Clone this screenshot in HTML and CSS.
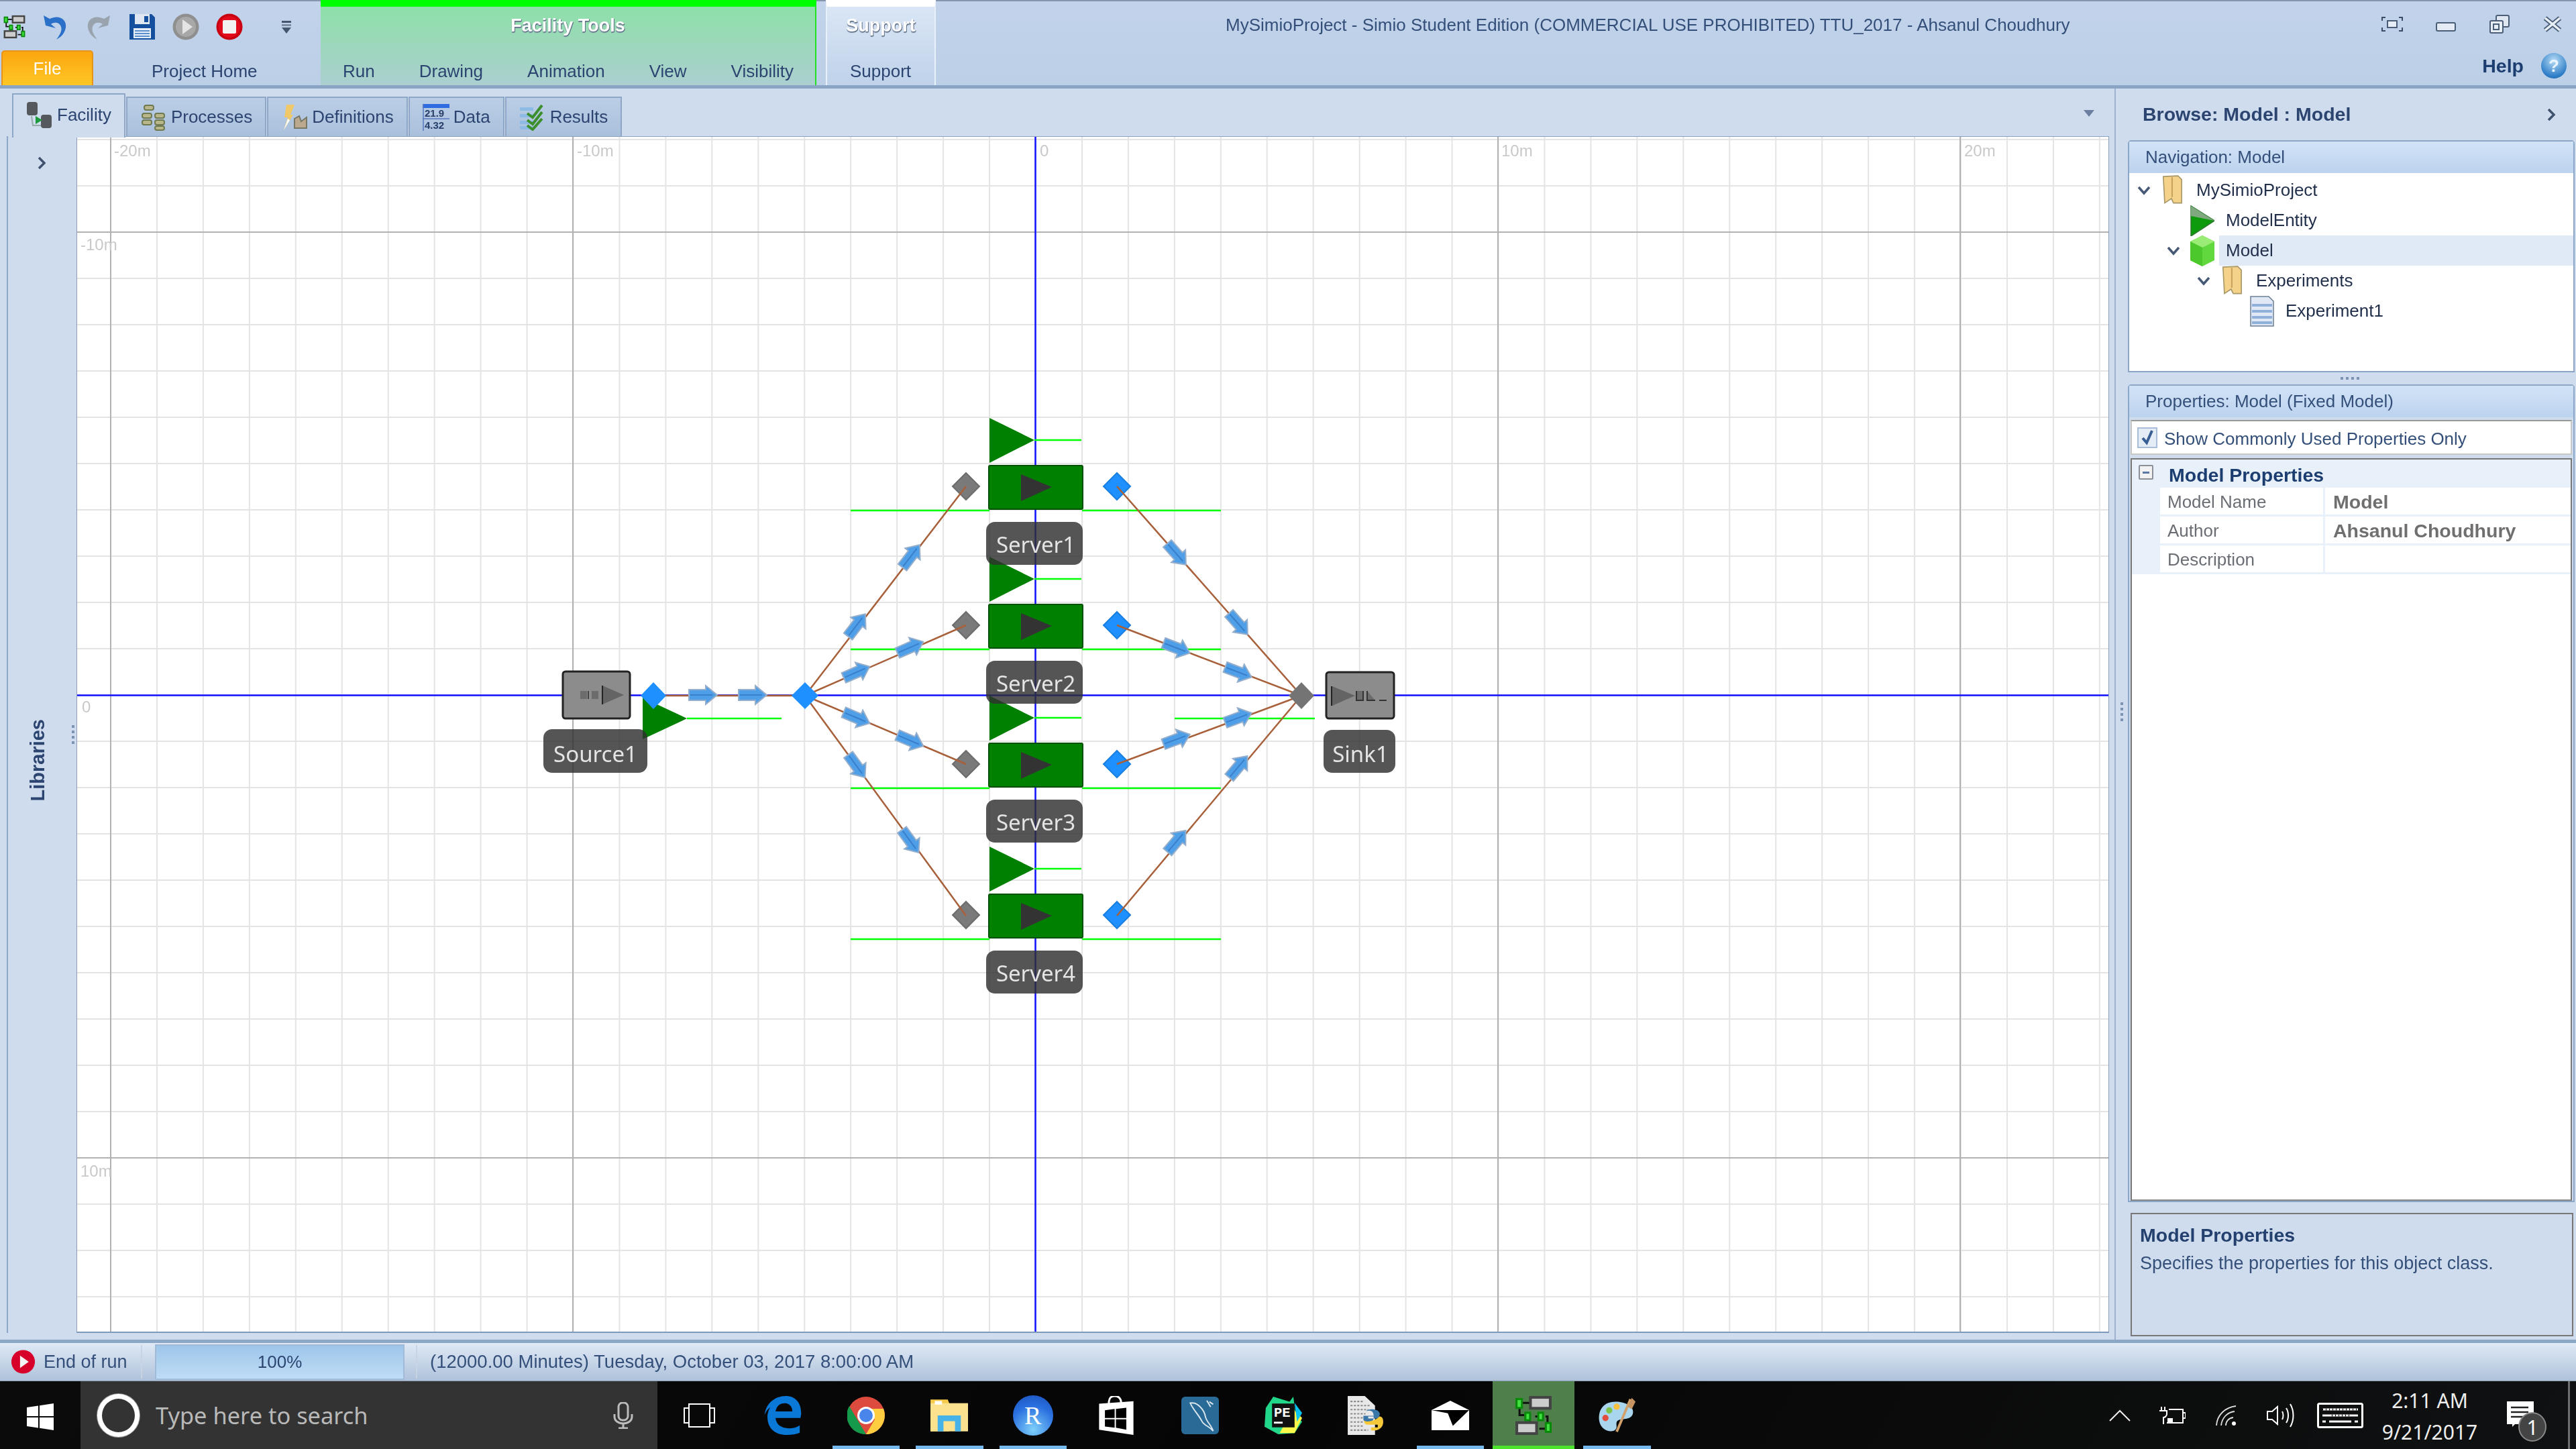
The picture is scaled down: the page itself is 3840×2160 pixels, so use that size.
FILE: index.html
```html
<!DOCTYPE html>
<html lang="en">
<head>
<meta charset="utf-8">
<title>MySimioProject - Simio</title>
<link rel="stylesheet" href="styles.css">
</head>
<body>
<svg class="defs" width="0" height="0" aria-hidden="true">
  <defs>
    <symbol id="simio" viewBox="0 0 55 57">
      <path d="M8 10H22M7 16V28H14M7 28V20M30 30H36M45 30H48V42M48 48H36M22 30V38" stroke="#111" stroke-width="3" fill="none"/>
      <rect x="21" y="0" width="33" height="20" fill="#444"/><rect x="25" y="4" width="25" height="12" fill="#ccc"/>
      <rect x="1" y="3" width="11" height="16" fill="#0a8a0a"/><rect x="4" y="6" width="5" height="10" fill="#3fe03f"/>
      <rect x="14" y="23" width="10" height="14" fill="#0a8a0a"/><rect x="17" y="26" width="4" height="8" fill="#3fe03f"/>
      <rect x="33" y="23" width="10" height="14" fill="#0a8a0a"/><rect x="36" y="26" width="4" height="8" fill="#3fe03f"/>
      <rect x="1" y="37" width="33" height="20" fill="#444"/><rect x="5" y="41" width="25" height="12" fill="#ccc"/>
      <rect x="44" y="38" width="10" height="16" fill="#0a8a0a"/><rect x="47" y="41" width="4" height="10" fill="#3fe03f"/>
    </symbol>
    <symbol id="folder" viewBox="0 0 30 42">
      <path d="M2 2 22 1 27 6V38H16L13 32 4 38Z" fill="#f5d28a" stroke="#a89868" stroke-width="1.5"/>
      <path d="M14 3V30" stroke="#c9a45e" stroke-width="2"/>
    </symbol>
    <g id="arw">
      <polygon points="-21,-8 4,-8 4,-14 21,0 4,14 4,8 -21,8" fill="#4f9fe8" stroke="#94aecb" stroke-width="2"/>
      <path d="M-19 0H14" stroke="#3a7fc8" stroke-width="2"/>
    </g>
    <g id="srv">
      <polygon points="1475,623 1542,656 1475,690" fill="#008000"/>
      <path d="M1542 656H1612M1268 761H1475M1613 761H1820" stroke="#00ff00" stroke-width="2.5"/>
      <rect x="1474" y="694" width="140" height="65" rx="2" fill="#008000" stroke="#005200" stroke-width="2"/>
      <polygon points="1522,707 1568,726 1522,747" fill="#333"/>
      <polygon points="1440,705 1460,725 1440,745 1420,725" fill="#7a7a7a" stroke="#6c6c6c" stroke-width="2"/>
      <polygon points="1665,705 1685,725 1665,745 1645,725" fill="#1e90ff" stroke="#1a7fe0" stroke-width="2"/>
    </g>
    <pattern id="minor" patternUnits="userSpaceOnUse" x="1543" y="1035" width="68.95" height="69">
      <rect x="0" y="0" width="2" height="69" fill="#e4e4e4"/>
      <rect x="0" y="0" width="68.95" height="2" fill="#e4e4e4"/>
    </pattern>
  </defs>
</svg>

<div class="window">
  <header class="ribbon">
    <div class="rib-left">
      <div class="qat">
        <svg class="qat-logo"><use href="#simio"/></svg>
        <svg class="qat-ico" viewBox="0 0 40 40"><path d="M6 18 3 3 12 8C26 1 38 9 36 21 35 28 30 35 22 39 27 32 31 26 29 20 27 13 19 12 14 16L21 22Z" fill="#2a70c8"/></svg>
        <svg class="qat-ico" viewBox="0 0 40 40"><path d="M34 18 37 3 28 8C14 1 2 9 4 21 5 28 10 35 18 39 13 32 9 26 11 20 13 13 21 12 26 16L19 22Z" fill="#98a3ae"/></svg>
        <svg class="qat-ico" viewBox="0 0 40 40"><path d="M1 1H34L39 6V39H1Z" fill="#14509e"/><rect x="9" y="1" width="22" height="15" fill="#dfe8f2"/><rect x="23" y="4" width="6" height="9" fill="#14509e"/><rect x="7" y="22" width="26" height="15" fill="#e6eef8"/><path d="M9 26H31M9 30H31M9 34H31" stroke="#5b8fd0" stroke-width="2"/></svg>
        <svg class="qat-ico" viewBox="0 0 40 40"><circle cx="20" cy="20" r="19.500" fill="#8f8f8f"/><circle cx="20" cy="20" r="15" fill="#a8a8a8"/><polygon points="15,9 30,20 15,31" fill="#e4e4e4"/></svg>
        <svg class="qat-ico" viewBox="0 0 40 40"><circle cx="20" cy="20" r="19.500" fill="#c80010"/><circle cx="20" cy="20" r="16" fill="#e20b1c"/><rect x="10" y="10" width="20" height="20" rx="2" fill="#f2f2f2"/></svg>
        <svg class="qat-drop" viewBox="0 0 16 20"><rect x="1" y="1" width="14" height="3" fill="#44566e"/><rect x="1" y="6" width="14" height="3" fill="#7d8da2"/><polygon points="1,11 15,11 8,20" fill="#44566e"/></svg>
      </div>
      <nav class="rib-tabs">
        <span class="file-tab">File</span>
        <span class="rtab home">Project Home</span>
      </nav>
    </div>
    <div class="ctx ctx-green">
      <div class="ctx-title">Facility Tools</div>
      <nav class="rib-tabs ctx-tabs">
        <span class="rtab">Run</span><span class="rtab">Drawing</span><span class="rtab">Animation</span><span class="rtab">View</span><span class="rtab">Visibility</span>
      </nav>
    </div>
    <div class="ctx ctx-support">
      <div class="ctx-title">Support</div>
      <nav class="rib-tabs ctx-tabs"><span class="rtab">Support</span></nav>
    </div>
    <div class="rib-right">
      <div class="titlebar">
        <div class="wintitle">MySimioProject - Simio Student Edition (COMMERCIAL USE PROHIBITED) TTU_2017 - Ahsanul Choudhury</div>
        <div class="winbtns">
          <svg class="wb wb1" viewBox="0 0 34 24"><path d="M2 7V2H7M27 2H32V7M32 17V22H27M7 22H2V17" stroke="#3b4d66" stroke-width="2" fill="none"/><rect x="10" y="7" width="14" height="10" fill="#e6edf6" stroke="#4b5e78" stroke-width="2"/></svg>
          <svg class="wb wb2" viewBox="0 0 30 14"><rect x="1" y="1" width="28" height="12" rx="2" fill="#e4ebf5" stroke="#4b5e78" stroke-width="2"/></svg>
          <svg class="wb wb3" viewBox="0 0 30 28"><rect x="10" y="1" width="19" height="17" rx="2" fill="#dfe7f2" stroke="#4b5e78" stroke-width="2"/><rect x="1" y="9" width="19" height="18" rx="2" fill="#e8eef6" stroke="#4b5e78" stroke-width="2"/><rect x="6" y="14" width="8" height="8" fill="none" stroke="#4b5e78" stroke-width="2"/></svg>
          <svg class="wb wb4" viewBox="0 0 30 24"><path d="M4 3 26 21M26 3 4 21" stroke="#4b5e78" stroke-width="7"/><path d="M4 3 26 21M26 3 4 21" stroke="#e8eef6" stroke-width="3.500"/></svg>
        </div>
      </div>
      <div class="helpbar">
        <span class="help">Help</span>
        <span class="help-ico">?</span>
      </div>
    </div>
  </header>

  <main class="main">
    <section class="workspace">
      <div class="doctabs">
        <div class="dtab active">
          <svg class="dt-ico" viewBox="0 0 40 40"><rect x="1" y="1" width="16" height="20" rx="4" fill="#55585c"/><rect x="22" y="20" width="16" height="20" rx="4" fill="#55585c"/><polygon points="14,22 24,28 14,34" fill="#1d9a3c"/><path d="M8 22 10 36H22" stroke="#9aa" fill="none" stroke-width="2"/></svg>
          <span>Facility</span>
        </div>
        <div class="dtab">
          <svg class="dt-ico" viewBox="0 0 40 40"><g fill="#b9b68a" stroke="#6f7a52" stroke-width="2"><rect x="6" y="2" width="14" height="7" rx="3"/><rect x="3" y="14" width="14" height="7" rx="3"/><rect x="22" y="14" width="14" height="7" rx="3"/><rect x="3" y="24" width="14" height="7" rx="3"/><rect x="22" y="24" width="14" height="7" rx="3"/><rect x="22" y="33" width="14" height="6" rx="3"/></g></svg>
          <span>Processes</span>
        </div>
        <div class="dtab">
          <svg class="dt-ico" viewBox="0 0 40 40"><path d="M8 1H20L14 16 18 16 4 39 10 20 5 20Z" fill="#f0c868"/><path d="M4 39 10 22 13 24Z" fill="#fff"/><path d="M20 36V22L27 18 30 26 38 20V36Z" fill="#bba98f" stroke="#776" stroke-width="2"/></svg>
          <span>Definitions</span>
        </div>
        <div class="dtab">
          <svg class="dt-ico data-ico" viewBox="0 0 40 40"><rect x="0" y="0" width="40" height="6" fill="#2f6ce0"/><path d="M1 0V40M0 22H40" stroke="#5a7ac0" stroke-width="1.500"/><text x="3" y="19" class="data-num">21.9</text><text x="3" y="37" class="data-num">4.32</text></svg>
          <span>Data</span>
        </div>
        <div class="dtab">
          <svg class="dt-ico" viewBox="0 0 40 40"><g fill="#8dbbe6"><rect x="1" y="5" width="20" height="5"/><rect x="1" y="15" width="20" height="5"/><rect x="1" y="25" width="20" height="5"/><rect x="1" y="33" width="20" height="5"/></g><path d="M12 14 20 20 34 2M12 24 20 30 34 12M12 32 20 38 34 22" stroke="#3d8f2d" stroke-width="4" fill="none"/></svg>
          <span>Results</span>
        </div>
        <svg class="doc-drop" viewBox="0 0 16 10"><polygon points="0,0 16,0 8,10" fill="#6b80a0"/></svg>
      </div>
      <div class="work-row">
        <aside class="libstrip">
          <svg class="strip-chev" viewBox="0 0 12 20"><path d="M2 2 10 10 2 18" stroke="#3e516d" stroke-width="3.500" fill="none"/></svg>
          <div class="lib-label">Libraries</div>
          <div class="grip grip-v"></div>
        </aside>
        <div class="canvas">
          <svg class="facility" viewBox="115 204 3028 1781" preserveAspectRatio="none">
            <rect x="115" y="204" width="3028" height="1781" fill="#fff"/>
            <rect x="115" y="204" width="3028" height="1781" fill="url(#minor)"/>
            <path d="M165 204V1985M854 204V1985M2233 204V1985M2922 204V1985M115 346H3143M115 1726H3143" stroke="#b2b2b2" stroke-width="2"/>
            <path d="M1543.500 204V1985M115 1036.500H3143" stroke="#1010ff" stroke-width="2.500"/>
            <g class="gridlabel">
              <text x="170" y="233">-20m</text><text x="860" y="233">-10m</text><text x="1550" y="233">0</text><text x="2238" y="233">10m</text><text x="2928" y="233">20m</text>
              <text x="120" y="373">-10m</text><text x="122" y="1062">0</text><text x="120" y="1754">10m</text>
            </g>
            <!-- source queue + sink queue -->
            <polygon points="958,1040 1024,1071 958,1102" fill="#008000"/>
            <path d="M1024 1071H1165M1751 1071H1960" stroke="#00ff00" stroke-width="2.500"/>
            <!-- servers -->
            <use href="#srv"/>
            <use href="#srv" y="207"/>
            <use href="#srv" y="414"/>
            <use href="#srv" y="639"/>
            <!-- paths -->
            <path class="link" d="M990 1037H1200M1200 1037 1440 725M1200 1037 1440 932M1200 1037 1440 1139M1200 1037 1440 1365M1665 725 1940 1037M1665 932 1940 1037M1665 1139 1940 1037M1665 1365 1940 1037"/>
            <!-- source -->
            <rect x="839" y="1001" width="100" height="70" rx="4" fill="#8c8c8c" stroke="#222" stroke-width="3"/>
            <rect x="865" y="1030" width="10" height="12" fill="#6c6c6c"/><rect x="876" y="1030" width="2" height="12" fill="#444"/><rect x="882" y="1030" width="10" height="12" fill="#6c6c6c"/>
            <polygon points="898,1022 930,1036 898,1050" fill="#646464"/><path d="M898 1022V1050" stroke="#222" stroke-width="2"/>
            <!-- sink -->
            <rect x="1977" y="1002" width="101" height="69" rx="4" fill="#8c8c8c" stroke="#222" stroke-width="3"/>
            <polygon points="1986,1023 2020,1037 1986,1052" fill="#646464"/><path d="M1985 1023V1052" stroke="#222" stroke-width="2"/>
            <path d="M2022 1030V1044H2032V1030M2038 1030V1044H2050" fill="#6c6c6c" stroke="#333" stroke-width="2"/><path d="M2056 1044H2067" stroke="#333" stroke-width="2"/>
            <!-- nodes -->
            <polygon points="974,1017 993,1037 974,1057 955,1037" fill="#1e90ff"/>
            <polygon points="1200,1017 1220,1037 1200,1057 1180,1037" fill="#1e90ff"/>
            <polygon points="1940,1017 1959,1037 1940,1057 1921,1037" fill="#747474"/>
            <!-- arrows -->
            <use href="#arw" transform="translate(1048 1036)"/><use href="#arw" transform="translate(1122 1036)"/>
            <use href="#arw" transform="translate(1277 932) rotate(-52.400)"/><use href="#arw" transform="translate(1358 829) rotate(-52.400)"/>
            <use href="#arw" transform="translate(1277 1002) rotate(-23.600)"/><use href="#arw" transform="translate(1357 965) rotate(-23.600)"/>
            <use href="#arw" transform="translate(1277 1070) rotate(23)"/><use href="#arw" transform="translate(1357 1104) rotate(23)"/>
            <use href="#arw" transform="translate(1277 1142) rotate(53.800)"/><use href="#arw" transform="translate(1357 1254) rotate(53.800)"/>
            <use href="#arw" transform="translate(1754 826) rotate(48.600)"/><use href="#arw" transform="translate(1846 930) rotate(48.600)"/>
            <use href="#arw" transform="translate(1754 966) rotate(20.900)"/><use href="#arw" transform="translate(1846 1002) rotate(20.900)"/>
            <use href="#arw" transform="translate(1754 1102) rotate(-20.400)"/><use href="#arw" transform="translate(1846 1070) rotate(-20.400)"/>
            <use href="#arw" transform="translate(1754 1254) rotate(-50)"/><use href="#arw" transform="translate(1846 1143) rotate(-50)"/>
            <!-- labels -->
            <g class="oblabel">
              <rect x="810" y="1087" width="155" height="65" rx="13"/><text x="887.500" y="1136">Source1</text>
              <rect x="1973" y="1088" width="107" height="64" rx="13"/><text x="2028" y="1136">Sink1</text>
              <rect x="1470" y="778" width="144" height="64" rx="13"/><text x="1544" y="824">Server1</text>
              <rect x="1470" y="985" width="144" height="64" rx="13"/><text x="1544" y="1031">Server2</text>
              <rect x="1470" y="1192" width="144" height="64" rx="13"/><text x="1544" y="1238">Server3</text>
              <rect x="1470" y="1417" width="144" height="64" rx="13"/><text x="1544" y="1463">Server4</text>
            </g>
          </svg>
        </div>
      </div>
    </section>

    <aside class="right">
      <div class="grip grip-r"></div>
      <div class="browse-head">
        <span>Browse: Model : Model</span>
        <svg class="strip-chev" viewBox="0 0 12 20"><path d="M2 2 10 10 2 18" stroke="#3e516d" stroke-width="3.500" fill="none"/></svg>
      </div>
      <section class="panel nav-panel">
        <div class="panel-head">Navigation: Model</div>
        <div class="tree">
          <div class="row l0">
            <svg class="exp" viewBox="0 0 20 14"><path d="M2 2 10 11 18 2" stroke="#465a76" stroke-width="3.500" fill="none"/></svg>
            <svg class="tico"><use href="#folder"/></svg>
            <span class="tlabel">MySimioProject</span>
          </div>
          <div class="row l1">
            <span class="exp"></span>
            <svg class="tico" viewBox="0 0 36 46"><polygon points="1,1 36,23 1,46" fill="#0d9a0d" stroke="#2f7a2f" stroke-width="1.500"/><polygon points="1,1 36,23 1,16" fill="#7fa87f"/></svg>
            <span class="tlabel">ModelEntity</span>
          </div>
          <div class="row l1">
            <svg class="exp" viewBox="0 0 20 14"><path d="M2 2 10 11 18 2" stroke="#465a76" stroke-width="3.500" fill="none"/></svg>
            <svg class="tico" viewBox="0 0 36 46"><polygon points="18,0 36,9 36,37 18,46 0,37 0,9" fill="#62d83f"/><polygon points="18,0 36,9 18,18 0,9" fill="#9aec76"/><polygon points="0,9 18,18 18,46 0,37" fill="#4cc72c"/></svg>
            <span class="tlabel selected">Model</span>
          </div>
          <div class="row l2">
            <svg class="exp" viewBox="0 0 20 14"><path d="M2 2 10 11 18 2" stroke="#465a76" stroke-width="3.500" fill="none"/></svg>
            <svg class="tico"><use href="#folder"/></svg>
            <span class="tlabel">Experiments</span>
          </div>
          <div class="row l3">
            <span class="exp"></span>
            <svg class="tico" viewBox="0 0 36 46"><path d="M1 1H28L35 8V45H1Z" fill="#dfe8f4" stroke="#6e7f95" stroke-width="1.500"/><path d="M3 14H33M3 23H33M3 32H33M3 40H33" stroke="#8fb0da" stroke-width="4"/></svg>
            <span class="tlabel">Experiment1</span>
          </div>
        </div>
      </section>
      <div class="grip grip-h"></div>
      <section class="panel prop-panel">
        <div class="panel-head">Properties: Model (Fixed Model)</div>
        <div class="common">
          <span class="check"><svg viewBox="0 0 22 24"><path d="M4 13 10 20 18 2" stroke="#3a5f95" stroke-width="4" fill="none"/></svg></span>
          <span class="common-text">Show Commonly Used Properties Only</span>
        </div>
        <div class="pgrid">
          <div class="pcat">
            <span class="minus"></span>
            <span>Model Properties</span>
          </div>
          <div class="prow"><span class="pname">Model Name</span><span class="pval">Model</span></div>
          <div class="prow"><span class="pname">Author</span><span class="pval">Ahsanul Choudhury</span></div>
          <div class="prow"><span class="pname">Description</span><span class="pval"></span></div>
        </div>
      </section>
      <section class="descbox">
        <div class="desc-title">Model Properties</div>
        <div class="desc-text">Specifies the properties for this object class.</div>
      </section>
    </aside>
  </main>

  <footer class="status">
    <svg class="st-ico" viewBox="0 0 40 40"><circle cx="20" cy="20" r="19" fill="#d6002a"/><polygon points="15,10 29,20 15,30" fill="#f4f4f4"/></svg>
    <span class="st-run">End of run</span>
    <span class="st-sep"></span>
    <div class="progress">100%</div>
    <span class="st-sep sep2"></span>
    <span class="st-time">(12000.00 Minutes) Tuesday, October 03, 2017 8:00:00 AM</span>
  </footer>
</div>

<footer class="taskbar">
  <div class="start">
    <svg class="winlogo" viewBox="0 0 40 40"><path d="M0 6 17 3.500V19H0ZM19 3.200 40 0V19H19ZM0 21H17V36.500L0 34ZM19 21H40V40L19 36.800Z" fill="#fff"/></svg>
  </div>
  <div class="search">
    <span class="cortana"></span>
    <span class="search-text">Type here to search</span>
    <svg class="mic" viewBox="0 0 30 40"><rect x="8" y="1" width="14" height="26" rx="6" fill="none" stroke="#bbb" stroke-width="3"/><path d="M2 18V22C2 28 8 32 15 32S28 28 28 22V18M15 32V38M8 39H22" fill="none" stroke="#bbb" stroke-width="3"/></svg>
  </div>
  <div class="apps">
    <div class="cell"><svg class="ti ti-view" viewBox="0 0 47 36"><rect x="8" y="1" width="31" height="34" fill="none" stroke="#fff" stroke-width="2"/><path d="M8 7H1V29H8M39 7H46V29H39" fill="none" stroke="#fff" stroke-width="2"/></svg></div>
    <div class="cell"><svg class="ti" viewBox="0 0 50 53"><path d="M49 30H15C16 40 24 44 33 44 39 44 44 43 48 40V50C43 52 37 53 31 53 13 53 4 43 4 28 4 25 5 20 8 15 3 19 1 23 0 26 2 10 14 0 29 0 42 0 50 9 50 24ZM38 21C38 14 33 9 26 10 20 10 16 15 15 21Z" fill="#0a78d7"/></svg></div>
    <div class="cell open"><svg class="ti" viewBox="0 0 56 56"><circle cx="28" cy="28" r="28" fill="#dd4b3e"/><path d="M28 56A28 28 0 0 1 3 14L16 36 28 56Z" fill="#159a4b"/><path d="M28 56 41 34 28 18H54A28 28 0 0 1 28 56Z" fill="#ffcd40"/><circle cx="28" cy="28" r="13" fill="#fff"/><circle cx="28" cy="28" r="10" fill="#4a85ec"/></svg></div>
    <div class="cell open"><svg class="ti" viewBox="0 0 52 44"><path d="M0 0H24L26 5V44H0Z" fill="#f7c948"/><rect x="0" y="5" width="52" height="39" fill="#fce28f"/><rect x="6" y="2" width="10" height="5" fill="#fff"/><path d="M10 44V22H42V44H34V30H18V44Z" fill="#45b3e8"/></svg></div>
    <div class="cell open"><div class="rlogo">R</div></div>
    <div class="cell"><svg class="ti" viewBox="0 0 53 60"><path d="M0 12 53 8V60L0 52Z" fill="#fff"/><path d="M15 12C15 2 19 0 24 0S34 3 34 10" stroke="#fff" stroke-width="3" fill="none"/><path d="M9 22 24 20V34H9ZM26 20 42 18V34H26ZM9 36H24V49L9 47ZM26 36H42V52L26 49Z" fill="#000"/></svg></div>
    <div class="cell"><svg class="ti" viewBox="0 0 59 59"><rect width="59" height="59" rx="6" fill="#2a6a96"/><path d="M14 10C25 8 36 20 38 32 40 40 48 46 50 54 44 46 36 46 32 38 27 28 18 20 14 10ZM40 6 46 16M44 8 50 12" stroke="#dbe8f0" stroke-width="2" fill="none"/></svg></div>
    <div class="cell"><svg class="ti" viewBox="0 0 60 60"><polygon points="14,0 40,8 46,0 50,30 60,40 48,58 22,60 0,48 2,18" fill="#21d789"/><polygon points="46,20 60,34 48,58 24,58" fill="#fcf84a"/><polygon points="48,10 60,26 52,40" fill="#07c3f2"/><rect x="12" y="11" width="36" height="38" fill="#111"/><text x="15" y="32" class="pe">PE</text><rect x="15" y="40" width="14" height="3" fill="#fff"/></svg></div>
    <div class="cell"><svg class="ti" viewBox="0 0 55 57"><path d="M0 0H25L40 14V57H0Z" fill="#e8e8e8"/><path d="M4 8H24M4 14H32M4 20H30M4 26H26M4 32H22M4 38H22M4 44H22M4 50H30" stroke="#8a8a8a" stroke-width="2" stroke-dasharray="3 2"/><path d="M27 22C36 20 38 24 38 30H30V33H42C44 33 47 30 47 26 46 18 30 18 27 22Z M23 34V29H38V32C38 36 34 38 32 38 28 38 23 38 23 34Z" fill="#3a76a8"/><path d="M52 38C52 48 42 52 34 50V46H44V42H30C26 42 24 40 24 36 30 40 44 34 46 30 50 30 52 32 52 38Z" fill="#f5c83a"/></svg></div>
    <div class="cell open"><svg class="ti" viewBox="0 0 60 47"><polygon points="30,0 60,15 0,15" fill="#fff"/><rect x="0" y="15" width="60" height="32" fill="#fff"/><polygon points="0,15 60,15 34,40 26,20" fill="#000"/></svg></div>
    <div class="cell simio-cell"><svg class="ti"><use href="#simio"/></svg></div>
    <div class="cell open"><svg class="ti" viewBox="0 0 60 56"><path d="M28 6C10 6 0 18 2 36 4 50 18 56 26 52 34 48 26 40 32 36 40 32 54 36 56 24 58 14 44 6 28 6Z" fill="#a9d6ee"/><circle cx="12" cy="32" r="5" fill="#e24d3d"/><circle cx="18" cy="20" r="5" fill="#7cc44a"/><circle cx="30" cy="14" r="5" fill="#f5c040"/><path d="M30 54 52 2" stroke="#d2a06a" stroke-width="4"/><path d="M48 14 54 0 60 6 54 18Z" fill="#c69460"/></svg></div>
  </div>
  <div class="tray">
    <div class="tcell c-chev"><svg class="chevup" viewBox="0 0 32 18"><path d="M1 17 16 2 31 17" stroke="#eee" stroke-width="2" fill="none"/></svg></div>
    <div class="tcell c-power"><svg class="tpower" viewBox="0 0 40 27"><path d="M4 1V7M9 1V7M1 7H12V12C12 15 9 17 7 17V27" stroke="#fff" stroke-width="2" fill="none"/><path d="M15 5H36V25H12M36 10H40V18H36" stroke="#fff" stroke-width="2" fill="none"/><rect x="13" y="18" width="8" height="6" fill="#fff"/></svg></div>
    <div class="tcell c-wifi"><svg class="twifi" viewBox="0 0 32 30"><path d="M1 30C2 14 14 3 30 1M8 30C9 19 17 10 28 9M15 30C15 24 19 19 26 18" stroke="#ddd" stroke-width="1.800" fill="none"/><circle cx="27" cy="27" r="3" fill="#fff"/></svg></div>
    <div class="tcell c-vol"><svg class="tvol" viewBox="0 0 42 36"><path d="M1 12H8L16 5V31L8 24H1Z" stroke="#fff" stroke-width="2" fill="none"/><path d="M23 12C25 15 25 21 23 24M29 7C33 13 33 23 29 29M35 1C41 11 41 25 35 35" stroke="#fff" stroke-width="2" fill="none"/></svg></div>
    <div class="tcell c-kbd"><svg class="tkbd" viewBox="0 0 69 38"><rect x="1.500" y="1.500" width="66" height="35" rx="2" fill="none" stroke="#fff" stroke-width="3"/><path d="M8 10H61M8 19H61M8 28H13M18 28H51M56 28H61" stroke="#fff" stroke-width="3" stroke-dasharray="none"/><path d="M8 10H61M22 19H48" stroke="#000" stroke-width="3.200" stroke-dasharray="1 4"/></svg></div>
    <div class="clock"><div>2:11 AM</div><div>9/21/2017</div></div>
    <div class="tcell c-notif">
      <svg class="tnote" viewBox="0 0 40 38"><path d="M0 0H40V34H12L8 38V34H0Z" fill="#fff"/><path d="M6 9H32M6 16H32M6 23H26" stroke="#222" stroke-width="2.500"/></svg>
      <span class="nbadge">1</span>
    </div>
    <div class="desktop-line"></div>
  </div>
</footer>
</body>
</html>
```
FILE: styles.css
```css
* { box-sizing: border-box; }
html, body { margin: 0; padding: 0; width: 3840px; height: 2160px; overflow: hidden; background: #0a0a0a; }
body { font-family: "Liberation Sans", Arial, sans-serif; font-size: 26px; color: #2f4a75; }
.defs { position: absolute; }

.window { width: 3840px; height: 2059px; display: flex; flex-direction: column; filter: blur(0.6px); }

/* ribbon */
.ribbon { height: 132px; flex: none; display: flex; background: linear-gradient(#c2d3ea, #bbcfe7); border-top: 2px solid #8496ae; border-bottom: 5px solid #8aa4c4; }
.rib-left { width: 478px; flex: none; display: flex; flex-direction: column; }
.qat { height: 73px; display: flex; align-items: center; padding: 3px 0 0 5px; }
.qat-logo { width: 33px; height: 38px; margin-right: 24px; }
.qat-ico { width: 40px; height: 40px; margin-right: 25px; }
.qat-drop { width: 16px; height: 20px; margin-left: 32px; }
.rib-tabs { flex: 1; display: flex; align-items: center; }
.file-tab { width: 137px; height: 52px; margin-left: 2px; display: flex; align-items: center; justify-content: center; color: #fff; border: 2px solid #e8941a; border-bottom: 0; border-radius: 5px 5px 0 0; background: linear-gradient(#fba60f, #ffc726); align-self: flex-end; }
.rtab { padding: 0 33px; margin-top: 10px; color: #2c4470; white-space: nowrap; }
.home { margin-left: 54px; }
.ctx { display: flex; flex-direction: column; flex: none; margin-top: -2px; }
.ctx-green { width: 739px; background: linear-gradient(#8ee0a8, #abcfd0); border-top: 10px solid #00ff00; border-right: 2px solid #22e022; }
.ctx-support { width: 164px; margin-left: 14px; background: linear-gradient(#dae6f5, #bfd2ea); border-top: 10px solid #fff; border-left: 2px solid #e8f0f9; border-right: 2px solid #e8f0f9; }
.ctx-title { height: 63px; display: flex; align-items: center; justify-content: center; padding-bottom: 7px; color: #fff; font-weight: bold; font-size: 27px; text-shadow: 1px 1px 0 #5a6a80, 0 2px 1px #7a8aa0; }
.ctx-tabs { flex: 1; padding-top: 2px; }
.ctx-support .rtab { padding: 0 34px; }
.rib-right { flex: 1; display: flex; flex-direction: column; }
.titlebar { height: 73px; display: flex; align-items: center; padding-bottom: 2px; position: relative; }
.wintitle { margin-left: 432px; color: #34507a; white-space: nowrap; }
.winbtns { margin-left: auto; display: flex; align-items: center; padding-right: 20px; padding-bottom: 4px; }
.wb1 { width: 34px; height: 24px; }
.wb2 { width: 30px; height: 14px; margin-left: 48px; margin-top: 8px; }
.wb3 { width: 30px; height: 28px; margin-left: 50px; }
.wb4 { width: 30px; height: 24px; margin-left: 49px; }
.helpbar { flex: 1; display: flex; justify-content: flex-end; align-items: center; padding-right: 14px; padding-bottom: 6px; }
.help { font-weight: bold; font-size: 28.5px; color: #1c3d70; }
.help-ico { width: 38px; height: 38px; margin-left: 26px; border-radius: 50%; display: flex; align-items: center; justify-content: center; color: #eaf4ff; font-weight: bold; background: radial-gradient(circle at 50% 30%, #b8dcf5, #2f7fc8 70%, #1c5ea6); }

/* main */
.main { flex: 1; display: flex; min-height: 0; background: #cfdced; border-bottom: 5px solid #8ca6c6; }
.workspace { width: 3154px; flex: none; display: flex; flex-direction: column; padding: 0 8px 10px 0; border-right: 2px solid #9db3d0; }
.doctabs { height: 71px; flex: none; display: flex; align-items: flex-end; padding-left: 18px; }
.dtab { height: 59px; display: flex; align-items: center; gap: 6px; padding: 0 19px; background: linear-gradient(#bbcee6, #a9c0dc); border: 2px solid #8ea7c7; border-bottom: 0; margin-right: 1px; color: #2c4470; }
.dtab.active { height: 66px; background: #cfdced; margin-bottom: -2px; position: relative; z-index: 1; padding-bottom: 4px; }
.dt-ico { width: 40px; height: 40px; flex: none; }
.data-num { font: bold 15px "Liberation Sans", sans-serif; fill: #28406a; }
.doc-drop { width: 16px; height: 10px; margin-left: auto; margin-right: 22px; margin-bottom: 29px; }
.work-row { flex: 1; display: flex; min-height: 0; }
.libstrip { width: 104px; margin-left: 10px; flex: none; display: flex; flex-direction: column; border-left: 2px solid #8ea7c7; position: relative; }
.strip-chev { width: 12px; height: 20px; flex: none; }
.libstrip .strip-chev { margin: 30px 0 0 44px; }
.lib-label { writing-mode: vertical-rl; transform: rotate(180deg); font-weight: bold; font-size: 29px; margin: 819px 0 0 28px; width: 32px; color: #2c4470; }
.grip { position: absolute; }
.grip-v { left: 95px; top: 878px; width: 4px; height: 32px; background: repeating-linear-gradient(#7d93b3 0 4px, transparent 4px 8px); }
.canvas { flex: 1; min-width: 0; border-top: 1px solid #8aa0bd; border-left: 1px solid #8aa0bd; border-right: 1px solid #8aa0bd; border-bottom: 2px solid #7d99bd; }
.facility { width: 100%; height: 100%; display: block; }
.gridlabel text { font: 24px "Liberation Sans", sans-serif; fill: #c9c9c9; }
.link { stroke: #a8603a; stroke-width: 2.5; fill: none; }
.oblabel rect { fill: rgb(48, 48, 48); fill-opacity: 0.82; }
.oblabel text { font: 33px "Noto Sans", sans-serif; fill: #e4e4e4; text-anchor: middle; }

/* right side */
.right { flex: 1; min-width: 0; display: flex; flex-direction: column; padding-left: 18px; padding-right: 2px; position: relative; }
.grip-r { left: 7px; top: 915px; width: 4px; height: 32px; background: repeating-linear-gradient(#7d93b3 0 4px, transparent 4px 8px); }
.browse-head { height: 77px; flex: none; display: flex; align-items: center; justify-content: space-between; padding: 0 29px 0 22px; font-weight: bold; font-size: 28.5px; color: #2c4470; }
.panel { display: flex; flex-direction: column; border: 2px solid #8ca6c8; border-radius: 5px 5px 0 0; background: #fff; }
.panel-head { height: 47px; flex: none; display: flex; align-items: center; padding-left: 24px; color: #34507a; background: linear-gradient(#d2e3f7, #bcd3ee); }
.nav-panel { height: 346px; flex: none; }
.tree { padding-top: 3px; }
.row { height: 45px; display: flex; align-items: center; color: #22304c; }
.l0 { padding-left: 11px; }
.l1 { padding-left: 55px; }
.l2 { padding-left: 100px; }
.l3 { padding-left: 144px; }
.exp { width: 22px; height: 14px; flex: none; }
.tico { width: 36px; height: 46px; margin-left: 14px; flex: none; }
.tlabel { flex: 1; height: 45px; display: flex; align-items: center; margin-left: 7px; padding-left: 10px; }
.selected { background: #e0eaf6; }
.grip-h { position: static; flex: none; height: 18px; display: flex; align-items: center; justify-content: center; }
.grip-h::before { content: ""; width: 32px; height: 4px; background: repeating-linear-gradient(90deg, #7d93b3 0 4px, transparent 4px 8px); }
.prop-panel { height: 1219px; flex: none; background: #cfdced; }
.common { height: 52px; flex: none; margin: 4px 2px 0; display: flex; align-items: center; gap: 10px; padding-left: 8px; background: #fff; border: 2px solid #c8c8c8; border-top-color: #999; color: #34507a; }
.common-text { padding-top: 5px; }
.check { width: 30px; height: 31px; flex: none; display: flex; align-items: center; justify-content: center; background: #e4ecf6; border: 2px solid #a9bdd8; }
.check svg { width: 22px; height: 24px; }
.pgrid { flex: 1; margin: 5px 2px 0; background: #fff; border: 2px solid #777; border-bottom-color: #888; }
.pcat { height: 42px; display: flex; align-items: center; background: #e8f0fa; font-weight: bold; font-size: 28.5px; color: #1c3d70; padding: 4px 0 0 55px; position: relative; }
.minus { position: absolute; left: 10px; top: 8px; width: 22px; height: 22px; border: 2px solid #8a8f98; border-radius: 2px; background: linear-gradient(90deg, transparent 4px, #5a78aa 4px, #5a78aa 14px, transparent 14px) center / 100% 3px no-repeat, #f2f2f2; }
.prow { height: 43px; margin-left: 0; padding-left: 42px; display: flex; background: linear-gradient(90deg, #e8f0fa 42px, #fff 42px); border-bottom: 3px solid #e8f0fa; color: #6a6e74; }
.pname { width: 246px; flex: none; display: flex; align-items: center; padding: 3px 0 0 11px; border-right: 3px solid #e8f0fa; }
.pval { flex: 1; display: flex; align-items: center; padding: 3px 0 0 12px; font-weight: bold; font-size: 28.5px; color: #6f6f6f; }
.descbox { margin: 16px 2px 0 4px; height: 184px; flex: none; border: 2px solid #777; padding: 15px 12px; color: #34507a; }
.desc-title { font-weight: bold; font-size: 28.5px; color: #24406e; }
.desc-text { margin-top: 10px; font-size: 27px; }

/* status */
.status { height: 57px; flex: none; display: flex; align-items: center; background: linear-gradient(#e0e9f6, #aec2da); color: #34507a; border-bottom: 1px solid #8a9bb2; }
.st-ico { width: 37px; height: 40px; margin-left: 16px; flex: none; }
.st-run { margin-left: 12px; width: 145px; font-size: 27px; }
.st-sep { width: 2px; height: 50px; background: #c8d4e4; }
.progress { width: 372px; height: 53px; margin-left: 19px; display: flex; align-items: center; justify-content: center; background: linear-gradient(#9dc6ea, #bfdcf6); border: 2px solid #a0bad8; color: #2c4470; }
.sep2 { margin-left: 17px; }
.st-time { margin-left: 19px; font-size: 27.5px; }

/* taskbar */
.taskbar { height: 101px; display: flex; background: linear-gradient(120deg, #0b0b0b, #050505 50%, #101112); color: #fff; }
.start { width: 120px; flex: none; display: flex; align-items: center; justify-content: center; }
.winlogo { width: 40px; height: 40px; margin-left: -1px; margin-top: 5px; }
.search { width: 860px; flex: none; display: flex; align-items: center; background: #333; font-family: "Noto Sans", sans-serif; }
.cortana { width: 63px; height: 64px; margin-left: 25px; border-radius: 50%; background: #333; border: 7px solid #fff; box-shadow: 0 0 0 1px #999; flex: none; }
.search-text { margin-left: 24px; font-size: 34.4px; color: #b9b9b9; width: 682px; white-space: nowrap; }
.mic { width: 30px; height: 40px; flex: none; }
.apps { display: flex; }
.cell { width: 124.4px; height: 101px; display: flex; align-items: center; justify-content: center; position: relative; }
.cell.open::after { content: ""; position: absolute; left: 12px; right: 12px; bottom: 0; height: 5px; background: #76b9ed; }
.ti { width: 56px; height: 58px; }
.ti-view { width: 47px; height: 36px; }
.simio-cell { background: #4f7f4a; width: 122px; margin: 0 1.2px; }
.simio-cell::after { content: ""; position: absolute; left: 0; right: 0; bottom: 0; height: 5px; background: #4de32c; }
.rlogo { width: 60px; height: 60px; border-radius: 50%; display: flex; align-items: center; justify-content: center; color: #fff; font: 38px "Liberation Serif", serif; background: radial-gradient(circle at 50% 85%, #7fd0fa, #2a6fe0 60%, #1850b8); }
.pe { font: bold 22px "Liberation Mono", monospace; fill: #fff; }
.tray { margin-left: auto; display: flex; }
.tcell { display: flex; align-items: center; justify-content: center; height: 101px; position: relative; }
.c-chev { width: 76px; }
.c-power { width: 80px; }
.c-wifi { width: 82px; }
.c-vol { width: 80px; }
.c-kbd { width: 96px; }
.c-notif { width: 98px; }
.chevup { width: 32px; height: 18px; }
.tpower { width: 40px; height: 27px; }
.twifi { width: 32px; height: 30px; }
.tvol { width: 42px; height: 36px; }
.tkbd { width: 69px; height: 38px; }
.tnote { width: 40px; height: 38px; margin-top: -4px; }
.nbadge { position: absolute; left: 46px; top: 46px; width: 42px; height: 44px; border-radius: 50%; background: #444; border: 2px solid #888; display: flex; align-items: center; justify-content: center; font: 30px "Noto Sans", sans-serif; color: #fff; }
.clock { width: 172px; display: flex; flex-direction: column; align-items: center; justify-content: center; gap: 13px; padding-top: 3px; font: 30px/34px "Noto Sans", sans-serif; color: #eee; }
.desktop-line { width: 12px; height: 101px; border-left: 3px solid #6e6e6e; margin-left: 22px; }
```
